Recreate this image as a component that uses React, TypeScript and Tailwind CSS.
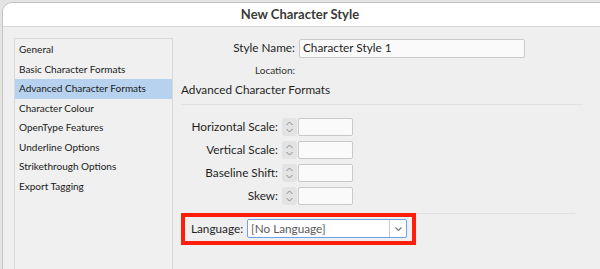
import React from 'react';

const FONT = { fontFamily: 'Lato, "Noto Sans", Arial, sans-serif' };

const SECTIONS = [
  'General',
  'Basic Character Formats',
  'Advanced Character Formats',
  'Character Colour',
  'OpenType Features',
  'Underline Options',
  'Strikethrough Options',
  'Export Tagging',
];

const Stepper = () => (
  <div className="flex h-[18px] w-[15px] flex-col items-center justify-center rounded-[3px] bg-[#e3e3e3]">
    <svg width="9" height="14" viewBox="0 0 9 14" fill="none" stroke="#8a8a8a" strokeWidth="1">
      <path d="M1.5 5 L4.5 2 L7.5 5" />
      <path d="M1.5 9 L4.5 12 L7.5 9" />
    </svg>
  </div>
);

const StepRow = ({ label }: { label: string }) => (
  <div className="flex h-[18px] items-center">
    <div className="w-[97px] whitespace-nowrap text-right text-[11.75px] text-[#1f1f1f]">{label}</div>
    <div className="ml-[4px]"><Stepper /></div>
    <div className="ml-[1px] h-[18px] w-[55px] rounded-[2px] border border-[#c9c9c9] bg-[#fafafa]" />
  </div>
);

export default function App() {
  return (
    <div className="h-[269px] w-[600px] overflow-hidden bg-[#e4e4e4] pl-[2px] pt-[2px]" style={FONT}>
      <div className="flex h-[280px] w-[610px] flex-col overflow-hidden rounded-tl-[10px] rounded-tr-[10px] border border-[#c4c4c4] bg-[#efefef]">
        <div className="flex h-[24px] shrink-0 items-center justify-center border-b border-[#d6d6d6] bg-white pr-[14px]">
          <span className="text-[13px] font-bold text-[#3a3a3a]">New Character Style</span>
        </div>

        <div className="flex flex-1">
          <div className="ml-[11px] mt-[11px] w-[159px] shrink-0 border border-[#d9d9d9] bg-[#f0f0f0] pt-[1px]">
            {SECTIONS.map((s) => (
              <div
                key={s}
                className={`flex h-[19.5px] items-center whitespace-nowrap pl-[4px] text-[10px] text-[#1a1a1a] ${
                  s === 'Advanced Character Formats' ? 'bg-[#b7d2ee]' : ''
                }`}
              >
                {s}
              </div>
            ))}
          </div>

          <div className="ml-[8px] mt-[12px] flex w-[404px] flex-col">
            <div className="flex h-[18px] items-center">
              <div className="w-[114px] whitespace-nowrap text-right text-[11.75px] text-[#1f1f1f]">Style Name:</div>
              <div className="ml-[4px] flex h-[19px] w-[226px] items-center rounded-[2px] border border-[#c9c9c9] bg-[#fafafa] pl-[3px] text-[11.75px] text-[#1f1f1f]">
                Character Style 1
              </div>
            </div>
            <div className="mt-[7px] flex h-[12px] items-center">
              <div className="w-[114px] whitespace-nowrap text-right text-[10px] text-[#333]">Location:</div>
            </div>
            <div className="mt-[5px] whitespace-nowrap text-[11.75px] text-[#1f1f1f]">Advanced Character Formats</div>
            <div className="mt-[5px] h-px w-[402px] bg-[#e2e2e2]" />

            <div className="mt-[13px] flex flex-col gap-[5px]">
              <StepRow label="Horizontal Scale:" />
              <StepRow label="Vertical Scale:" />
              <StepRow label="Baseline Shift:" />
              <StepRow label="Skew:" />
            </div>

            <div className="mt-[8px] h-px w-[394px] bg-[#e2e2e2]" />

            <div className="-mt-[1px] flex h-[32px] w-[235px] items-center border-[4px] border-[#ff1e0a] pl-[6px]">
              <div className="whitespace-nowrap text-[11.75px] text-[#1f1f1f]">Language:</div>
              <div className="ml-[4px] flex h-[19px] w-[160px] items-center rounded-[2px] border border-[#6fa1e6] bg-white">
                <div className="flex-1 whitespace-nowrap pl-[3px] text-[11.75px] text-[#5a5a5a]">[No Language]</div>
                <div className="flex h-full w-[17px] items-center justify-center border-l border-[#c9c9c9]">
                  <svg width="9" height="6" viewBox="0 0 9 6" fill="none" stroke="#777" strokeWidth="1.1">
                    <path d="M1.5 1.5 L4.5 4.5 L7.5 1.5" />
                  </svg>
                </div>
              </div>
            </div>
          </div>
        </div>
      </div>
    </div>
  );
}
